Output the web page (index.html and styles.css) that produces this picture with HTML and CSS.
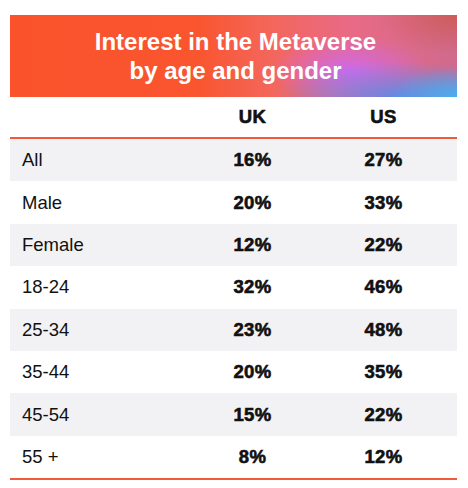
FILE: index.html
```html
<!DOCTYPE html>
<html lang="en">
<head>
  <meta charset="UTF-8" />
  <title>Interest in the Metaverse</title>
  <link rel="stylesheet" href="styles.css">
</head>
<body>
  <div class="card">
    <div class="banner">
      <h1>Interest in the Metaverse<br />by age and gender</h1>
    </div>

    <div class="row head">
      <span></span>
      <span class="val">UK</span>
      <span class="val">US</span>
    </div>

    <div class="rows">
      <div class="row shade"><span>All</span><span class="val">16%</span><span class="val">27%</span></div>
      <div class="row"><span>Male</span><span class="val">20%</span><span class="val">33%</span></div>
      <div class="row shade"><span>Female</span><span class="val">12%</span><span class="val">22%</span></div>
      <div class="row"><span>18-24</span><span class="val">32%</span><span class="val">46%</span></div>
      <div class="row shade"><span>25-34</span><span class="val">23%</span><span class="val">48%</span></div>
      <div class="row"><span>35-44</span><span class="val">20%</span><span class="val">35%</span></div>
      <div class="row shade"><span>45-54</span><span class="val">15%</span><span class="val">22%</span></div>
      <div class="row"><span>55 +</span><span class="val">8%</span><span class="val">12%</span></div>
    </div>
  </div>
</body>
</html>
```

FILE: styles.css
```css
body, html {
  margin: 0;
  padding: 0;
  background-color: #ffffff;
  font-family: "Liberation Sans", Arial, sans-serif;
  color: #111;
}

.card {
  width: 447px;
  margin: 15px 0 0 10px;
}

.banner {
  height: 82px;
  display: flex;
  align-items: center;
  justify-content: center;
  background:
    radial-gradient(ellipse 70px 30px at 100% 100%, rgba(70, 175, 240, 1), rgba(70, 175, 240, 0) 100%),
    radial-gradient(ellipse 130px 35px at 88% 100%, rgba(85, 140, 240, 0.9), rgba(85, 140, 240, 0) 100%),
    radial-gradient(ellipse 80px 35px at 76% 68%, rgba(205, 105, 240, 0.95), rgba(205, 105, 240, 0) 100%),
    radial-gradient(ellipse 80px 40px at 100% 0%, rgba(205, 90, 80, 0.85), rgba(205, 90, 80, 0) 100%),
    linear-gradient(90deg, #fa532c 0%, #f9552f 42%, #f4665a 58%, #ea6a85 75%, #d06a8e 100%);
}

.banner h1 {
  margin: 0;
  color: #fff;
  font-size: 24px;
  line-height: 29px;
  font-weight: bold;
  text-align: center;
  padding-left: 4px;
}

.row {
  display: grid;
  grid-template-columns: 1fr 131px 131px;
  padding-right: 8px;
  align-items: center;
  height: 42.4px;
  font-size: 18.5px;
}

.row span:first-child {
  padding-left: 12px;
}

.row.head {
  border-bottom: 2px solid #ef5a3c;
  box-sizing: border-box;
  height: 42px;
}

.rows {
  border-bottom: 2px solid #ef5a3c;
}

.shade {
  background-color: #f2f1f4;
}

.val {
  text-align: center;
  font-weight: bold;
  font-size: 18.5px;
  letter-spacing: 0.4px;
  -webkit-text-stroke: 0.6px #111;
}
```
